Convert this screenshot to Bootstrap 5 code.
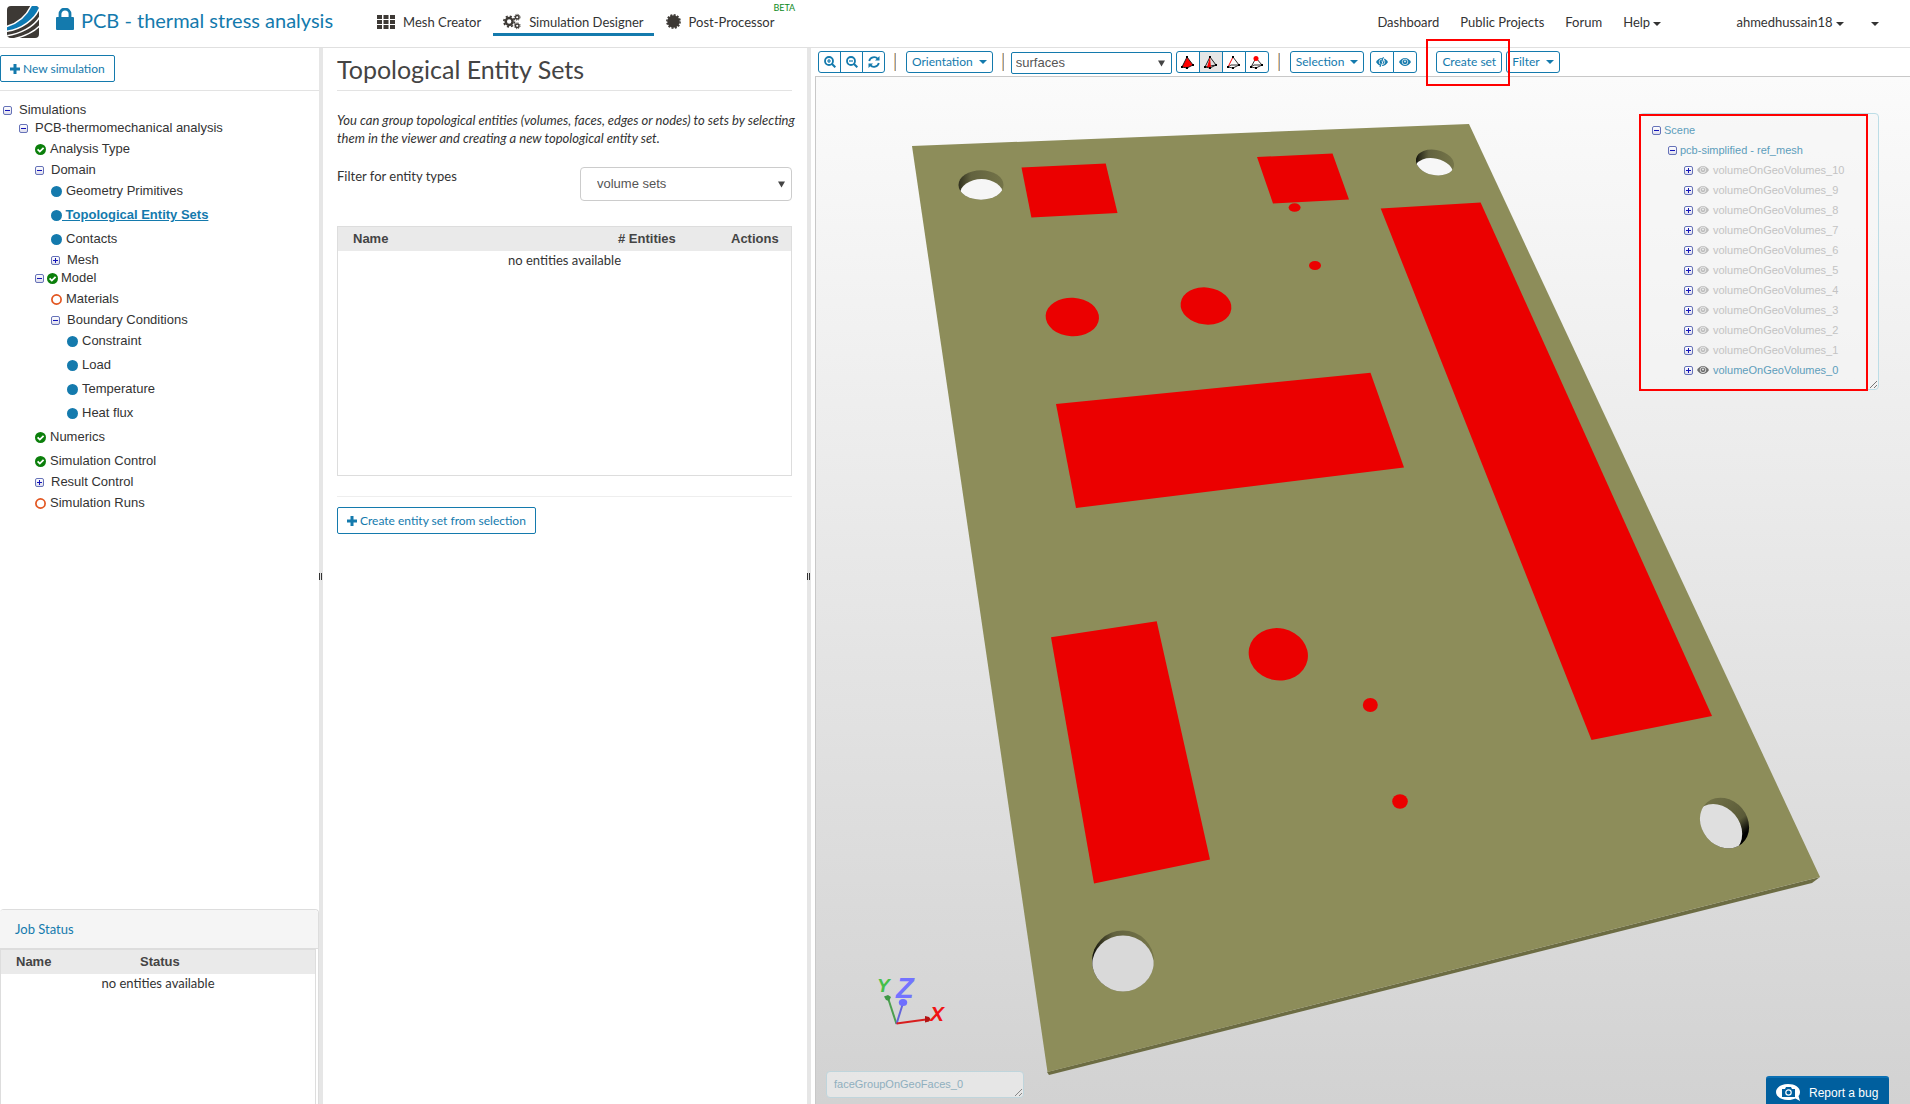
<!DOCTYPE html>
<html lang="en">
<head>
<meta charset="utf-8">
<meta name="viewport" content="width=device-width, initial-scale=1">
<title>PCB - thermal stress analysis</title>
<link href="https://cdn.jsdelivr.net/npm/bootstrap@5.3.0/dist/css/bootstrap.min.css" rel="stylesheet">
<style>
  :root { --brand: #147aad; --ink: #333; --line: #e3e3e3; --arial: "Liberation Sans", Arial, sans-serif; }
  body { font-family: Lato, sans-serif; font-size: 13px; line-height: 18px; color: var(--ink); background: #fff; }
  a { color: inherit; text-decoration: none; }
  svg { flex: none; }

  .topbar { height: 48px; border-bottom: 1px solid #e0e0e0; }
  .logo-link { margin: 6px 0 0 7px; }
  .brand-title { margin: 8px 0 0 17px; gap: 7px; font-size: 20px; line-height: 24px; color: var(--brand); }
  .mode-nav { margin: 10px 0 0 34px; gap: 2px; }
  .user-nav { margin: 13px 31px 0 auto; gap: 21px; }
  .user-nav .help-link { margin-right: 54px; }
  .user-nav .account-link { margin-right: 6px; }
  .mode-link { padding: 0 10px; height: 26px; border-bottom: 3px solid transparent; gap: 8px; color: var(--ink); }
  .mode-link.active { border-color: var(--brand); }
  .beta-tag { position: absolute; left: 100%; top: -8px; margin-left: -11px; font-size: 9px; line-height: 12px; color: #0c8a1c; }
  .caret-down { display: inline-block; border: 4px solid transparent; border-top-color: currentColor; border-bottom: 0; }

  .pane-left { flex: 319 1 0; min-width: 0; }
  .pane-mid { flex: 484 1 0; min-width: 0; }
  .pane-view { flex: 1099 1 0; min-width: 0; }
  .mid-body { padding: 0 15px 0 14px; }
  .splitter { flex: 0 0 4px; background: #e6e6e6; }
  .grip { width: 3px; height: 7px; border: solid #333; border-width: 0 1px; background: #e6e6e6; }

  .btn-line { --bs-btn-color: var(--brand); --bs-btn-border-color: var(--brand); --bs-btn-bg: #fff; --bs-btn-hover-color: #fff;
    --bs-btn-hover-bg: var(--brand); --bs-btn-active-bg: #e6e6e6; --bs-btn-active-border-color: var(--brand); --bs-btn-active-color: var(--brand);
    --bs-btn-font-size: 12px; --bs-btn-line-height: 18px; --bs-btn-border-radius: 2px; --bs-btn-padding-x: 9px; --bs-btn-padding-y: 0px; --bs-btn-font-family: Lato, sans-serif;
    display: inline-flex; align-items: center; gap: 3px; height: 27px; white-space: nowrap; }
  .new-bar { height: 43px; padding-top: 7px; border-bottom: 1px solid var(--line); }

  .tree { font-family: var(--arial); font-size: 13px; list-style: none; margin: 0; padding: 0; }
  .tree ul { list-style: none; margin: 0; padding: 0 0 0 16px; }
  .sim-tree { padding: 10px 0 0 3px; }
  .node { display: flex; align-items: center; }
  .branch { height: 18px; gap: 7px; }
  .branch.with-state { gap: 3px; }
  .leaf { height: 24px; gap: 4px; }
  .node.picked { color: var(--brand); font-weight: bold; gap: 0; }
  .node.picked a { text-decoration: underline; white-space: pre; }

  .job-panel { height: 195px; border: 1px solid #ddd; border-left: 0; border-bottom: 0; border-radius: 4px 4px 0 0; }
  .job-head { height: 39px; padding: 10px 15px; background: #f5f5f5; border-bottom: 1px solid #ddd; color: var(--brand); border-radius: 4px 4px 0 0; }
  .job-grid { margin-right: 2px; }
  .grid-box { border: 1px solid #ddd; }
  .grid-box table { width: 100%; }
  .grid-box th { font-family: var(--arial); background: #eaeaea; height: 24px; padding: 0; color: #444; }
  .grid-box th:first-child { padding-left: 15px; }
  .grid-box td { text-align: center; padding: 0; }
  .col-job { width: 139px; }
  .col-count { width: 113px; }
  .col-act { width: 60px; }
  .sets-grid { margin-top: 25px; height: 250px; }
  .end-line { margin: 20px 0 10px; border-color: #bbb; }

  .pane-title { font-size: 25px; line-height: 30px; font-weight: 400; margin: 0; height: 43px; padding-top: 6px; border-bottom: 1px solid var(--line); color: #444; }
  .intro { padding-top: 20px; margin: 0 -10px 20px 0; font-style: italic; }
  .sel { font-family: var(--arial); font-size: 13px; appearance: none; color: #555; border: 1px solid #ccc; border-radius: 4px; background: #fff url("data:image/svg+xml,%3Csvg xmlns='http://www.w3.org/2000/svg' width='7' height='7'%3E%3Cpath d='M0 .5h7L3.500 6.500z' fill='%23444'/%3E%3C/svg%3E") no-repeat right 6px center; }
  .sel-type { width: 212px; height: 34px; padding: 0 16px; }
  .sel-pick { width: 161px; height: 22px; margin: 1px 4px 0 -3px; padding: 0 4px; border-color: var(--brand); border-radius: 2px; }

  .toolbar { height: 28px; padding: 3px 0 0 7px; display: flex; align-items: flex-start; }
  .toolbar .btn-line { --bs-btn-padding-x: 5px; --bs-btn-border-radius: 3px; height: 22px; gap: 6px; justify-content: center; }
  .toolbar .btn-group .btn-line { padding: 0; width: 24px; flex: 0 0 auto; }
  .toolbar .zoom-group .btn-line { width: 23px; }
  .eye-group { margin-left: 6px; }
  .bar { width: 2px; height: 18px; margin: 2px 10px 0 9px; border-left: 1px solid #ecc48c; border-right: 1px solid #8f9db4; flex: none; }
  .bar-last { margin-right: 8px; }

  .viewer { position: relative; margin-left: 4px; border: solid #c8c8c8; border-width: 1px 0 0 1px; background: linear-gradient(#fbfbfb, #d2d2d2); overflow: hidden; }
  .float-box { position: absolute; border: 1px solid #bcdde6; border-radius: 4px; background: rgba(245, 245, 245, .55); font-family: var(--arial); font-size: 11px; }
  .scene-box { top: 36px; right: 31px; width: 240px; height: 277px; padding: 6px 12px; color: #5d9dbb; }
  .scene-box .node { height: 20px; gap: 3px; }
  .scene-box .tree { font-size: 11px; }
  .scene-box #volumes .node { gap: 4px; }
  .scene-box .off { color: #c3c3c3; }
  .face-box { left: 10px; bottom: 6px; width: 198px; height: 27px; padding: 3px 7px; color: #8fafbe; border-color: #bfd5dc; }
  .size-grip { position: absolute; right: 1px; bottom: 1px; }
  .mark-box { position: absolute; border: 2px solid #f00; pointer-events: none; }
  .mark-scene { top: 37px; right: 42px; width: 229px; height: 277px; }
  .mark-create { left: -10px; top: -12px; width: 84px; height: 47px; z-index: 3; }
  .bug-btn { position: absolute; right: 21px; bottom: 0; height: 28px; width: 123px; border: 0; border-top: 2px solid #0a70b4; border-radius: 3px 3px 0 0; background: #005f9e; color: #fff; font-family: var(--arial); font-size: 12px; display: flex; align-items: center; gap: 9px; padding: 3px 10px 0; white-space: nowrap; }
</style>
<script src="https://cdn.jsdelivr.net/npm/bootstrap@5.3.0/dist/js/bootstrap.bundle.min.js"></script>
</head>
<body class="vh-100 d-flex flex-column overflow-hidden">

<!-- Shared icon symbols -->
<svg width="0" height="0" class="position-absolute">
  <defs>
    <linearGradient id="tg" x1="0" y1="0" x2="0" y2="1"><stop offset="0" stop-color="#fff"/><stop offset="1" stop-color="#dcdcec"/></linearGradient>
    <symbol id="i-minus" viewBox="0 0 9 9"><rect x=".5" y=".5" width="8" height="8" rx="1.500" fill="url(#tg)" stroke="#6672b8"/><path d="M2 4.500h5" stroke="#1414b8"/></symbol>
    <symbol id="i-plus" viewBox="0 0 9 9"><rect x=".5" y=".5" width="8" height="8" rx="1.500" fill="url(#tg)" stroke="#6672b8"/><path d="M2 4.500h5M4.500 2v5" stroke="#1414b8"/></symbol>
    <symbol id="i-dot" viewBox="0 0 11 11"><circle cx="5.500" cy="5.500" r="5.500" fill="#147aad"/></symbol>
    <symbol id="i-ring" viewBox="0 0 11 11"><circle cx="5.500" cy="5.500" r="4.600" fill="#fff" stroke="#e2551f" stroke-width="1.700"/></symbol>
    <symbol id="i-ok" viewBox="0 0 11 11"><circle cx="5.500" cy="5.500" r="5.500" fill="#0b7f0b"/><path d="M2.600 5.400l2.200 2.200 3.800-3.800" fill="none" stroke="#fff" stroke-width="1.800"/></symbol>
    <symbol id="i-add" viewBox="0 0 10 10"><path d="M3.500 0h3v3.500H10v3H6.500V10h-3V6.500H0v-3h3.500z" fill="currentColor"/></symbol>
    <symbol id="i-eye" viewBox="0 0 12 8"><path d="M0 4Q2.500 0 6 0t6 4Q9.500 8 6 8T0 4z" fill="currentColor"/><circle cx="6" cy="3.900" r="2.800" fill="none" stroke="#f3f3f3" stroke-width=".8"/><circle cx="6" cy="3.500" r=".9" fill="#f3f3f3"/></symbol>
  </defs>
</svg>

<header class="topbar d-flex align-items-start flex-shrink-0">
  <a href="#" class="logo-link" aria-label="Home"><svg width="32" height="32" viewBox="0 0 32 32" class="d-block">
    <clipPath id="lg"><rect width="32" height="32" rx="4"/></clipPath>
    <g clip-path="url(#lg)"><rect width="32" height="32" fill="#3d3935"/>
      <path d="M0 20.500C12 17 20 9 24 0h8v3C27 14 14 23.500 0 25z" fill="#0d7ab4"/>
      <path d="M-1 20.700C12 17 20 9 24.500-1M-1 25.500C14 23.500 28 14 33 1M-1 30C13 28 27 21 33 10.500M6 33C17 30.500 27 26 33 19.500" fill="none" stroke="#fff" stroke-width="1.500"/></g>
  </svg></a>
  <div class="d-flex align-items-start brand-title">
    <svg width="18" height="22" viewBox="0 0 18 22"><path d="M1 9h16a1 1 0 0 1 1 1v11a1 1 0 0 1-1 1H1a1 1 0 0 1-1-1V10a1 1 0 0 1 1-1z" fill="currentColor"/><path d="M4 10V6a5 5 0 0 1 10 0v4" fill="none" stroke="currentColor" stroke-width="2.800"/></svg>
    <span class="text-nowrap">PCB - thermal stress analysis</span>
  </div>
  <nav class="d-flex align-items-start mode-nav">
    <a href="#" class="mode-link d-flex align-items-center text-nowrap"><svg width="18" height="14" viewBox="0 0 18 14" fill="#3d3935"><path d="M0 0h5v4H0zM6.500 0h5v4h-5zM13 0h5v4h-5zM0 5h5v4H0zM6.500 5h5v4h-5zM13 5h5v4h-5zM0 10h5v4H0zM6.500 10h5v4h-5zM13 10h5v4h-5z"/></svg>Mesh Creator</a>
    <a href="#" class="mode-link active d-flex align-items-center text-nowrap"><svg width="18" height="17" viewBox="0 0 19 17" fill="none" stroke="#3d3935"><circle cx="6.500" cy="8.500" r="3.600" stroke-width="2.600"/><circle cx="6.500" cy="8.500" r="5.600" stroke-width="1.800" stroke-dasharray="2.200 2.198"/><circle cx="15" cy="4" r="1.900" stroke-width="1.500"/><circle cx="15" cy="4" r="3.100" stroke-width="1" stroke-dasharray="1.217 1.217"/><circle cx="15" cy="13" r="1.900" stroke-width="1.500"/><circle cx="15" cy="13" r="3.100" stroke-width="1" stroke-dasharray="1.217 1.217"/></svg>Simulation Designer</a>
    <a href="#" class="mode-link d-flex align-items-center text-nowrap position-relative"><svg width="15" height="15" viewBox="0 0 15 15"><circle cx="7.500" cy="7.500" r="6.200" fill="#3d3935"/><circle cx="7.500" cy="7.500" r="6.600" fill="none" stroke="#3d3935" stroke-width="1.600" stroke-dasharray="2 1.456"/></svg>Post-Processor<span class="beta-tag">BETA</span></a>
  </nav>
  <nav class="d-flex align-items-center text-nowrap user-nav">
    <a href="#">Dashboard</a>
    <a href="#">Public Projects</a>
    <a href="#">Forum</a>
    <a href="#" class="help-link">Help <span class="caret-down align-middle"></span></a>
    <a href="#" class="account-link">ahmedhussain18 <span class="caret-down align-middle"></span></a>
    <a href="#" aria-label="More"><span class="caret-down align-middle"></span></a>
  </nav>
</header>

<main class="d-flex flex-grow-1" style="min-height:0">
  <section class="pane-left d-flex flex-column">
    <div class="new-bar"><button class="btn btn-line" type="button"><svg width="10" height="10"><use href="#i-add"/></svg>New simulation</button></div>
    <ul class="tree sim-tree flex-grow-1">
      <li><div class="node branch"><svg width="9" height="9"><use href="#i-minus"/></svg><a href="#">Simulations</a></div>
        <ul>
          <li><div class="node branch"><svg width="9" height="9"><use href="#i-minus"/></svg><a href="#">PCB-thermomechanical analysis</a></div>
            <ul>
              <li class="node leaf"><svg width="11" height="11"><use href="#i-ok"/></svg><a href="#">Analysis Type</a></li>
              <li><div class="node branch"><svg width="9" height="9"><use href="#i-minus"/></svg><a href="#">Domain</a></div>
                <ul>
                  <li class="node leaf"><svg width="11" height="11"><use href="#i-dot"/></svg><a href="#">Geometry Primitives</a></li>
                  <li class="node leaf picked"><svg width="11" height="11"><use href="#i-dot"/></svg><a href="#"> Topological Entity Sets</a></li>
                  <li class="node leaf"><svg width="11" height="11"><use href="#i-dot"/></svg><a href="#">Contacts</a></li>
                  <li class="node branch"><svg width="9" height="9"><use href="#i-plus"/></svg><a href="#">Mesh</a></li>
                </ul></li>
              <li><div class="node branch with-state"><svg width="9" height="9"><use href="#i-minus"/></svg><svg width="11" height="11"><use href="#i-ok"/></svg><a href="#">Model</a></div>
                <ul>
                  <li class="node leaf"><svg width="11" height="11"><use href="#i-ring"/></svg><a href="#">Materials</a></li>
                  <li><div class="node branch"><svg width="9" height="9"><use href="#i-minus"/></svg><a href="#">Boundary Conditions</a></div>
                    <ul>
                      <li class="node leaf"><svg width="11" height="11"><use href="#i-dot"/></svg><a href="#">Constraint</a></li>
                      <li class="node leaf"><svg width="11" height="11"><use href="#i-dot"/></svg><a href="#">Load</a></li>
                      <li class="node leaf"><svg width="11" height="11"><use href="#i-dot"/></svg><a href="#">Temperature</a></li>
                      <li class="node leaf"><svg width="11" height="11"><use href="#i-dot"/></svg><a href="#">Heat flux</a></li>
                    </ul></li>
                </ul></li>
              <li class="node leaf"><svg width="11" height="11"><use href="#i-ok"/></svg><a href="#">Numerics</a></li>
              <li class="node leaf"><svg width="11" height="11"><use href="#i-ok"/></svg><a href="#">Simulation Control</a></li>
              <li class="node branch"><svg width="9" height="9"><use href="#i-plus"/></svg><a href="#">Result Control</a></li>
              <li class="node leaf"><svg width="11" height="11"><use href="#i-ring"/></svg><a href="#">Simulation Runs</a></li>
            </ul></li>
        </ul></li>
    </ul>
    <div class="job-panel d-flex flex-column">
      <div class="job-head">Job Status</div>
      <div class="grid-box job-grid flex-grow-1 border-bottom-0">
        <table><thead><tr><th class="col-job">Name</th><th>Status</th></tr></thead>
          <tbody><tr><td colspan="2">no entities available</td></tr></tbody></table>
      </div>
    </div>
  </section>

  <div class="splitter d-flex align-items-center"><span class="grip"></span></div>

  <section class="pane-mid">
    <div class="mid-body">
      <h1 class="pane-title text-nowrap">Topological Entity Sets</h1>
      <p class="intro">You can group topological entities (volumes, faces, edges or nodes) to sets by selecting them in the viewer and creating a new topological entity set.</p>
      <div class="d-flex justify-content-between align-items-start">
        <label for="etype">Filter for entity types</label>
        <select id="etype" class="sel sel-type"><option>volume sets</option></select>
      </div>
      <div class="grid-box sets-grid">
        <table><thead><tr><th>Name</th><th class="col-count">#&nbsp;Entities</th><th class="col-act">Actions</th></tr></thead>
          <tbody><tr><td colspan="3">no entities available</td></tr></tbody></table>
      </div>
      <hr class="end-line">
      <button class="btn btn-line" type="button"><svg width="10" height="10"><use href="#i-add"/></svg>Create entity set from selection</button>
    </div>
  </section>

  <div class="splitter d-flex align-items-center"><span class="grip"></span></div>

  <section class="pane-view d-flex flex-column">
    <div class="toolbar">
      <div class="btn-group zoom-group">
        <button class="btn btn-line" type="button" aria-label="Zoom in"><svg width="12" height="12" viewBox="0 0 12 12" fill="none" stroke="currentColor"><circle cx="5" cy="5" r="4" stroke-width="1.800"/><path d="M8 8l3.300 3.300" stroke-width="2"/><path d="M3 5h4M5 3v4" stroke-width="1.200"/></svg></button>
        <button class="btn btn-line" type="button" aria-label="Zoom out"><svg width="12" height="12" viewBox="0 0 12 12" fill="none" stroke="currentColor"><circle cx="5" cy="5" r="4" stroke-width="1.800"/><path d="M8 8l3.300 3.300" stroke-width="2"/><path d="M3 5h4" stroke-width="1.200"/></svg></button>
        <button class="btn btn-line" type="button" aria-label="Refresh"><svg width="12" height="12" viewBox="0 0 12 12" fill="none" stroke="currentColor" stroke-width="1.800"><path d="M1.200 5A5 5 0 0 1 9.800 2.800M10.800 7a5 5 0 0 1-8.600 2.200"/><path d="M11.500 0v4.500H7zM.5 12V7.500H5z" fill="currentColor" stroke="none"/></svg></button>
      </div>
      <span class="bar"></span>
      <button class="btn btn-line" type="button">Orientation<span class="caret-down"></span></button>
      <span class="bar"></span>
      <select class="sel sel-pick" aria-label="Pick mode"><option>surfaces</option></select>
      <div class="btn-group">
        <button class="btn btn-line" type="button" aria-label="Volumes"><svg width="13" height="13" viewBox="0 0 13 13"><path d="M6 1L1 11l5 1 6-3z" fill="#f00" stroke="#222"/><path d="M5 0h2v2H5zM0 10h2v2H0zM5 11h2v2H5zM11 8h2v2h-2z"/></svg></button>
        <button class="btn btn-line active" type="button" aria-label="Surfaces"><svg width="13" height="13" viewBox="0 0 13 13"><path d="M6 1L1 11l5 1 6-3zM1 11l11-2" fill="#ddd" stroke="#222"/><path d="M6 1L3 11l4 1z" fill="#f00"/><path d="M5 0h2v2H5zM0 10h2v2H0zM5 11h2v2H5zM11 8h2v2h-2z"/></svg></button>
        <button class="btn btn-line" type="button" aria-label="Edges"><svg width="13" height="13" viewBox="0 0 13 13"><path d="M6 1l6 8-6 3-5-1 3-2 8 0" fill="none" stroke="#333"/><path d="M6 1L1 11" stroke="#f00"/><path d="M5 0h2v2H5zM0 10h2v2H0zM5 11h2v2H5zM11 8h2v2h-2z"/></svg></button>
        <button class="btn btn-line" type="button" aria-label="Nodes"><svg width="13" height="13" viewBox="0 0 13 13"><path d="M6 2l6 7-6 3-5-1zM1 11l3-2h8" fill="none" stroke="#333"/><path d="M0 10h2v2H0zM5 11h2v2H5zM11 8h2v2h-2z"/><circle cx="6" cy="2.500" r="2.500" fill="#f00"/></svg></button>
      </div>
      <span class="bar"></span>
      <button class="btn btn-line" type="button">Selection<span class="caret-down"></span></button>
      <div class="btn-group eye-group">
        <button class="btn btn-line" type="button" aria-label="Hide"><svg width="12" height="10" viewBox="0 -1 12 10"><use href="#i-eye" width="12" height="8"/><path d="M8.200-1L4.800 9" stroke="#fff" stroke-width="1.200"/><path d="M7.400-1L4 9" stroke="currentColor" stroke-width="1"/></svg></button>
        <button class="btn btn-line" type="button" aria-label="Show"><svg width="12" height="8"><use href="#i-eye"/></svg></button>
      </div>
      <span class="bar bar-last"></span>
      <div class="position-relative">
        <button class="btn btn-line" type="button">Create set</button>
        <span class="mark-box mark-create"></span>
      </div>
      <button class="btn btn-line ms-1" type="button">Filter<span class="caret-down"></span></button>
    </div>

    <div class="viewer flex-grow-1">
      
      <svg class="position-absolute top-0 start-0 w-100 h-100" viewBox="816 77 1094 1027">
        <defs>
          <linearGradient id="wl"><stop offset="0" stop-color="#000"/><stop offset=".12" stop-color="#2b2b1b"/><stop offset=".35" stop-color="#62623f"/><stop offset="1" stop-color="#77774a"/></linearGradient>
          <linearGradient id="wr" x1="0" y1="0" x2=".8" y2="1"><stop offset="0" stop-color="#77774a"/><stop offset=".65" stop-color="#5a5a38"/><stop offset=".85" stop-color="#000"/></linearGradient>
          <clipPath id="h1"><ellipse cx="981" cy="185" rx="22.500" ry="14.700"/></clipPath>
          <clipPath id="h2"><ellipse cx="1435" cy="162.500" rx="19.300" ry="12.600" transform="rotate(12 1435 162.500)"/></clipPath>
          <clipPath id="h3"><ellipse cx="1724.500" cy="823" rx="27" ry="22.800" transform="rotate(50 1724.500 823)"/></clipPath>
          <clipPath id="h4"><ellipse cx="1123" cy="961" rx="31" ry="30.500"/></clipPath>
        </defs>
        <path d="M1047 1072L1049 1075 1812 883 1820 877z" fill="#6c6c43"/>
        <path d="M912 146L1469 124 1820 877 1047.500 1072z" fill="#8d8d5a"/>
        <g clip-path="url(#h1)"><rect x="950" y="165" width="60" height="40" fill="url(#wl)"/><ellipse cx="981.500" cy="194" rx="21.500" ry="15" fill="#f6f6f6"/></g>
        <g clip-path="url(#h2)"><rect x="1414" y="148" width="42" height="30" fill="url(#wl)"/><ellipse cx="1434" cy="171" rx="19.300" ry="12.600" transform="rotate(12 1434 171)" fill="#f7f7f7"/></g>
        <g clip-path="url(#h3)"><rect x="1697" y="795" width="55" height="55" fill="url(#wr)"/><ellipse cx="1718" cy="829" rx="27" ry="22" transform="rotate(50 1718 829)" fill="#dfdfdf"/></g>
        <g clip-path="url(#h4)"><rect x="1090" y="928" width="66" height="66" fill="url(#wl)"/><ellipse cx="1123" cy="965.500" rx="31" ry="30" fill="#d9d9d9"/></g>
        <g fill="#eb0000">
          <path d="M1021.500 167.500L1105.700 163.500 1117.500 213 1031.400 217.500z"/>
          <path d="M1257 157L1332.500 153.500 1349 199.500 1273 203.500z"/>
          <path d="M1380.700 208.500L1480.600 202.500 1712 716 1591.500 740z"/>
          <path d="M1056 404L1370.500 372.800 1404 467.500 1076 508z"/>
          <path d="M1051 637.300L1156.700 621.300 1210 859.500 1094 883.500z"/>
          <ellipse cx="1294.600" cy="207.500" rx="6" ry="4.300"/><ellipse cx="1315" cy="265.500" rx="6" ry="4.500"/>
          <ellipse cx="1072.300" cy="317" rx="26.700" ry="19.300" transform="rotate(3 1072.300 317)"/>
          <ellipse cx="1206" cy="306" rx="25.500" ry="18.500" transform="rotate(7 1206 306)"/>
          <ellipse cx="1278.300" cy="654.300" rx="29.800" ry="26" transform="rotate(12 1278.300 654.300)"/>
          <ellipse cx="1370.300" cy="705" rx="7.500" ry="7"/><ellipse cx="1400" cy="801.500" rx="7.800" ry="7.300"/>
        </g>
        <g fill="none" stroke-width="2"><path d="M896.500 1024L888 998" stroke="#4c9f50"/><path d="M896.500 1024L903 1003" stroke="#6464dc"/><path d="M896.500 1023.500L926 1019.500" stroke="#d81e1e"/></g>
        <path d="M884 996.500l4-1.500 3 2-2 4-3-1z" fill="#3f9845"/><ellipse cx="903" cy="1002.500" rx="4.200" ry="3.500" fill="#6e6eff"/><path d="M925 1016l4 1 1.500 2-1.500 2.500-4 1z" fill="#b41414"/>
        <g font-family="Liberation Sans, sans-serif" font-weight="bold" font-style="italic">
          <text x="877" y="992" font-size="19" fill="#46c04a">Y</text><text x="896" y="998" font-size="29" fill="#7373ff">Z</text><text x="930" y="1021" font-size="21" fill="#f01414">X</text>
        </g>
      </svg>

      <div class="float-box scene-box">
        <ul class="tree">
          <li><div class="node"><svg width="9" height="9"><use href="#i-minus"/></svg><span>Scene</span></div>
            <ul>
              <li><div class="node"><svg width="9" height="9"><use href="#i-minus"/></svg><span>pcb-simplified - ref_mesh</span></div>
                <ul id="volumes"></ul></li>
            </ul></li>
        </ul>
        <svg class="size-grip" width="8" height="8" viewBox="0 0 8 8" stroke="#777"><path d="M1 8L8 1M5 8l3-3"/></svg>
      </div>
      <span class="mark-box mark-scene"></span>
      <div class="float-box face-box">faceGroupOnGeoFaces_0
        <svg class="size-grip" width="8" height="8" viewBox="0 0 8 8" stroke="#888"><path d="M1 8L8 1M5 8l3-3"/></svg>
      </div>
      <button class="bug-btn" type="button"><svg width="24" height="17" viewBox="0 0 24 17"><path d="M12 0C5 0 0 3.500 0 8s5 8 12 8c3 0 5.500-.6 7.500-1.500L24 17l-1.500-5C23.500 11 24 9.500 24 8c0-4.500-5-8-12-8z" fill="#fff"/><path d="M6 5h3l1-2h5l1 2h3v8H6z" fill="#005f9e"/><circle cx="12.500" cy="8.500" r="2.700" fill="#005f9e" stroke="#fff" stroke-width="1.200"/></svg>Report a bug</button>
    </div>
  </section>
</main>

<script>
  // One row per volume, only the last one is visible in the scene
  const list = document.getElementById('volumes');
  for (let i = 10; i >= 0; i--) {
    const eye = i ? '#bdbdbd' : '#6e6e6e';
    list.insertAdjacentHTML('beforeend', `<li class="node ${i ? 'off' : ''}"><svg width="9" height="9"><use href="#i-plus"/></svg><svg width="12" height="8" color="${eye}"><use href="#i-eye"/></svg><span>volumeOnGeoVolumes_${i}</span></li>`);
  }
</script>
</body>
</html>
